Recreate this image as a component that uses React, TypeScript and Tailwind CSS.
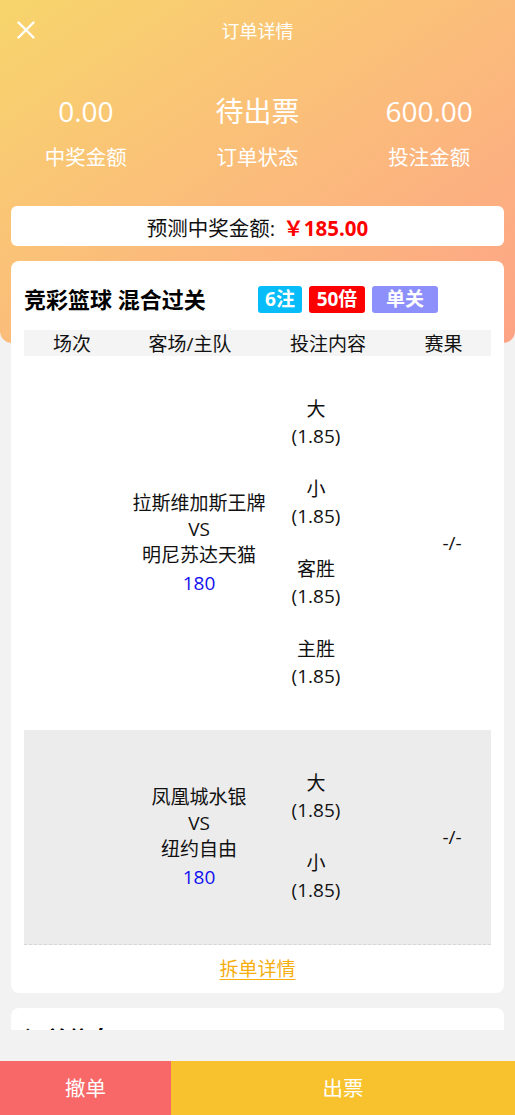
import React from 'react';

const font = { fontFamily: '"Open Sans", "Noto Sans CJK SC", sans-serif' };

type Match = {
    home: string;
    away: string;
    line: string;
    bets: { name: string; odds: string }[];
    result: string;
};

const matches: Match[] = [
    {
        home: '拉斯维加斯王牌',
        away: '明尼苏达天猫',
        line: '180',
        bets: [
            { name: '大', odds: '(1.85)' },
            { name: '小', odds: '(1.85)' },
            { name: '客胜', odds: '(1.85)' },
            { name: '主胜', odds: '(1.85)' },
        ],
        result: '-/-',
    },
    {
        home: '凤凰城水银',
        away: '纽约自由',
        line: '180',
        bets: [
            { name: '大', odds: '(1.85)' },
            { name: '小', odds: '(1.85)' },
        ],
        result: '-/-',
    },
];

function CloseIcon() {
    return (
        <svg width="18" height="18" viewBox="0 0 18 18" fill="none">
            <path d="M1.5 1.5L16.5 16.5M16.5 1.5L1.5 16.5" stroke="white" strokeWidth="2.4" strokeLinecap="round" />
        </svg>
    );
}

function Stat({ value, label }: { value: string; label: string }) {
    return (
        <div className="flex flex-col items-center text-white">
            <span className="text-[28px] leading-[36px]">{value}</span>
            <span className="mt-[14px] text-[20.5px] leading-[28px]">{label}</span>
        </div>
    );
}

function MatchRow({ match, shaded }: { match: Match; shaded: boolean }) {
    return (
        <div
            className={
                shaded
                    ? 'grid grid-cols-[100px_150px_84px_55px_78px] items-center bg-[#ececec] py-[27px] border-b border-dashed border-[#d6d6d6]'
                    : 'grid grid-cols-[100px_150px_84px_55px_78px] items-center bg-white py-[27px]'
            }
        >
            <div />
            <div className="flex flex-col items-center text-[19px] leading-[26px] text-[#111]">
                <span className="whitespace-nowrap">{match.home}</span>
                <span>VS</span>
                <span className="whitespace-nowrap">{match.away}</span>
                <span className="mt-[2px] text-[#1010f0]">{match.line}</span>
            </div>
            <div className="flex flex-col items-center text-[19px] leading-[27px] text-[#111]">
                {match.bets.map((b, i) => (
                    <div key={i} className="my-[13px] flex flex-col items-center">
                        <span>{b.name}</span>
                        <span>{b.odds}</span>
                    </div>
                ))}
            </div>
            <div />
            <div className="text-center text-[19px] text-[#111]">{match.result}</div>
        </div>
    );
}

export default function App() {
    return (
        <div className="flex h-[1115px] flex-col overflow-hidden bg-[#f2f2f2]" style={font}>
            <div className="h-[1030px] overflow-hidden">
                {/* Header */}
                <div className="rounded-b-[12px] bg-linear-to-br from-[#f7d56b] to-[#fda386] pb-[97px]">
                    <div className="relative flex h-[62px] items-center justify-center">
                        <button className="absolute left-[17px] top-[21px]">
                            <CloseIcon />
                        </button>
                        <h1 className="text-[18px] text-white">订单详情</h1>
                    </div>
                    <div className="grid grid-cols-3 pt-[31px]">
                        <Stat value="0.00" label="中奖金额" />
                        <Stat value="待出票" label="订单状态" />
                        <Stat value="600.00" label="投注金额" />
                    </div>
                    <div className="mx-[11px] mt-[35px] flex h-[40px] items-center justify-center rounded-[6px] bg-white pt-[4px] text-[20.5px]">
                        <span className="text-[#111]">预测中奖金额:</span>
                        <span className="ml-[8px] font-bold text-[#ff0000]">￥185.00</span>
                    </div>
                </div>

                {/* Order card */}
                <div className="mx-[11px] -mt-[82px] rounded-[8px] bg-white px-[13px] pt-[24px]">
                    <div className="flex h-[28px] items-center">
                        <span className="w-[234px] text-[22px] font-bold text-black">竞彩篮球 混合过关</span>
                        <div className="flex gap-[7px] text-[19px] font-bold text-white">
                            <span className="flex h-[27px] w-[44px] items-center justify-center rounded-[3px] bg-[#06bdf9]">6注</span>
                            <span className="flex h-[27px] w-[56px] items-center justify-center rounded-[3px] bg-[#ff0000]">50倍</span>
                            <span className="flex h-[27px] w-[66px] items-center justify-center rounded-[3px] bg-[#8d90fa]">单关</span>
                        </div>
                    </div>
                    <div className="mt-[17px] grid h-[26px] grid-cols-[96px_140px_136px_95px] items-center bg-[#f4f4f4] text-center text-[19px] text-[#111]">
                        <span>场次</span>
                        <span>客场/主队</span>
                        <span>投注内容</span>
                        <span>赛果</span>
                    </div>
                    {matches.map((m, i) => (
                        <MatchRow key={i} match={m} shaded={i % 2 === 1} />
                    ))}
                    <div className="flex h-[48px] items-center justify-center">
                        <a className="text-[19px] text-[#f6ae10] underline underline-offset-[3px]">拆单详情</a>
                    </div>
                </div>

                {/* Order info card */}
                <div className="mx-[11px] mt-[15px] rounded-t-[8px] bg-white px-[13px] pt-[16px]">
                    <h3 className="text-[22px] font-bold leading-[28px] text-black">订单信息</h3>
                </div>
            </div>

            <div className="h-[31px]" />

            {/* Bottom actions */}
            <div className="flex h-[54px] text-[20.5px] text-white">
                <button className="w-[171px] bg-[#f86868]">撤单</button>
                <button className="flex-1 bg-[#f8c22f]">出票</button>
            </div>
        </div>
    );
}
